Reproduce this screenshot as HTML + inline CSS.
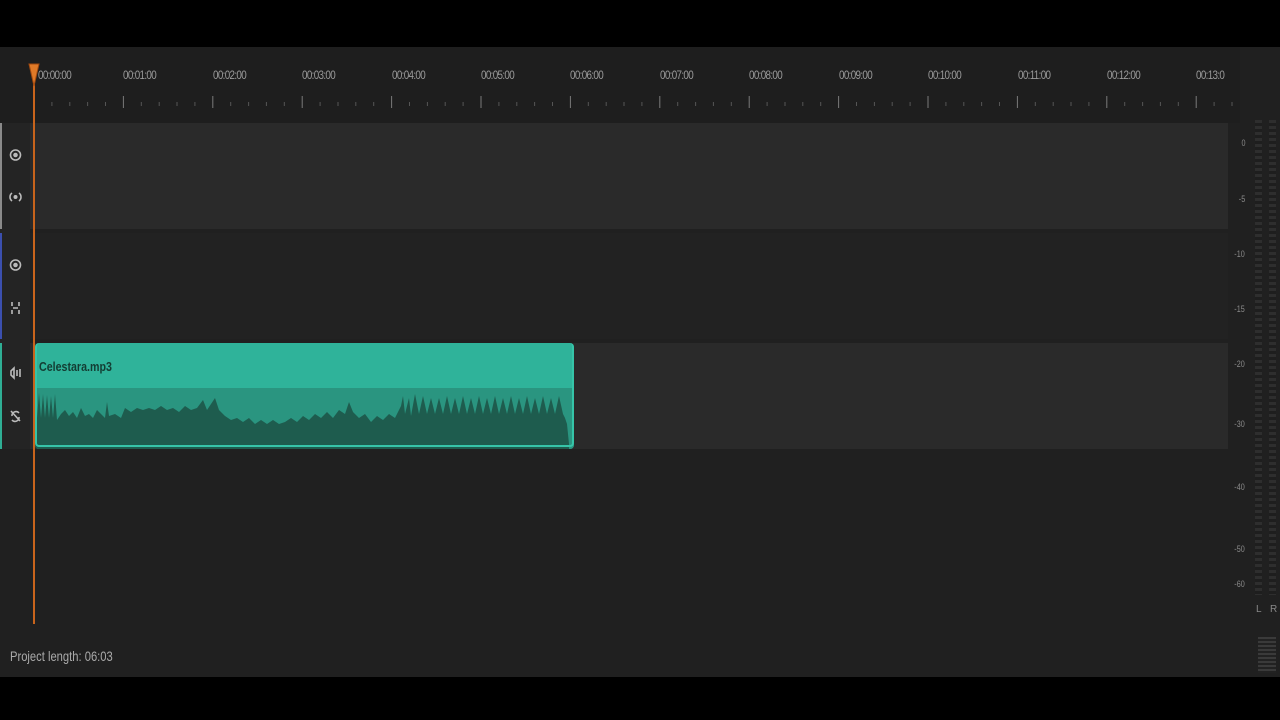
<!DOCTYPE html>
<html><head><style>
body{margin:0;width:1280px;height:720px;background:#000;position:relative;overflow:hidden;font-family:"Liberation Sans",sans-serif}
.a{position:absolute}
.lbl{position:absolute;top:68px;color:#9a9a9a;font-size:12px;letter-spacing:-0.8px;transform:scaleX(.82);transform-origin:left}
.db{position:absolute;right:34px;color:#8a8a8a;font-size:9px;transform:scaleX(.8)}
</style></head><body>
<div class="a" style="left:0;top:47px;width:1280px;height:630px;background:#202020"></div>
<div class="a" style="left:0;top:47px;width:1240px;height:76px;background:#1e1e1e"></div>
<div class="a" style="left:0;top:123px;width:1228px;height:106px;background:#2a2a2a"></div>
<div class="a" style="left:0;top:233px;width:1228px;height:106px;background:#222"></div>
<div class="a" style="left:0;top:343px;width:1228px;height:106px;background:#2a2a2a"></div>
<div class="a" style="left:0;top:123px;width:30px;height:326px;background:#242424"></div>
<div class="a" style="left:0;top:123px;width:2px;height:106px;background:#8a8a8a"></div>
<div class="a" style="left:0;top:233px;width:2px;height:106px;background:#3b4fae"></div>
<div class="a" style="left:0;top:343px;width:2px;height:106px;background:#2fae94"></div>
<svg class="a" style="left:0;top:140px" width="30" height="300" fill="none" stroke="#bbb" stroke-width="1.6">
<circle cx="15.5" cy="15" r="5"/><circle cx="15.5" cy="15" r="1.5" fill="#bbb"/>
<path d="M12 53a5 5 0 0 0 0 8M19 53a5 5 0 0 1 0 8"/><circle cx="15.5" cy="57" r="1.2" fill="#bbb"/>
<circle cx="15.5" cy="125" r="5"/><circle cx="15.5" cy="125" r="1.5" fill="#bbb"/>
<path d="M12 162v4M19 162v4M12 170v4M19 170v4M13 168h5" />
<path d="M11 231l3-3v10l-3-3zM17 230v6M20 229v8"/>
<path d="M11 271l9 10M12 276a4 4 0 0 1 7-3M19 277a4 4 0 0 1-7 3"/>
</svg>
<svg class="a" style="left:0;top:47px" width="1240" height="76" stroke="#555">
<path d="M34 49v12M123.4 49v12M212.8 49v12M302.2 49v12M391.6 49v12M481 49v12M570.4 49v12M659.8 49v12M749.2 49v12M838.6 49v12M928 49v12M1017.4 49v12M1106.8 49v12M1196.2 49v12" stroke="#7a7a7a"/>
<path id="mn" d=""/>
</svg>
<div class="lbl" style="left:38px">00:00:00</div>
<div class="lbl" style="left:123px">00:01:00</div>
<div class="lbl" style="left:213px">00:02:00</div>
<div class="lbl" style="left:302px">00:03:00</div>
<div class="lbl" style="left:392px">00:04:00</div>
<div class="lbl" style="left:481px">00:05:00</div>
<div class="lbl" style="left:570px">00:06:00</div>
<div class="lbl" style="left:660px">00:07:00</div>
<div class="lbl" style="left:749px">00:08:00</div>
<div class="lbl" style="left:839px">00:09:00</div>
<div class="lbl" style="left:928px">00:10:00</div>
<div class="lbl" style="left:1018px">00:11:00</div>
<div class="lbl" style="left:1107px">00:12:00</div>
<div class="lbl" style="left:1196px">00:13:0</div>
<div class="a" style="left:35px;top:343px;width:539px;height:106px;background:#2fb39a;border-radius:4px;overflow:hidden">
 <div class="a" style="left:0;top:45px;width:539px;height:61px;background:#2a9580"></div>
 <svg class="a" style="left:0;top:45px" width="539" height="61">
 <path fill="#1e5c4e" d="M0 61V8L2 30L4 5L6 30L8 6L10 30L12 7L14 30L16 8L18 30L20 6L22 32L26 26L30 22L34 28L38 24L42 30L46 20L50 28L54 26L58 30L62 22L66 26L70 30L72 14L74 28L80 26L86 30L90 20L96 24L102 20L108 22L114 20L120 22L126 18L132 22L138 20L144 24L150 18L156 22L162 20L168 12L172 22L176 16L180 10L184 22L190 28L196 32L202 30L208 34L214 30L220 36L226 32L232 36L238 32L244 36L250 34L256 30L262 34L268 28L274 32L280 26L286 30L292 24L298 30L304 22L310 26L314 14L318 24L324 30L330 26L336 34L342 28L348 32L354 26L360 30L366 18L368 8L370 26L374 10L376 28L380 6L384 26L388 8L392 26L396 10L400 26L404 10L408 26L412 8L416 26L420 10L424 26L428 8L432 26L436 10L440 26L444 8L448 26L452 10L456 26L460 8L464 26L468 10L472 26L476 8L480 26L484 10L488 26L492 8L496 26L500 10L504 26L508 8L512 26L516 10L520 26L524 8L528 26L530 30L532 36L534 56V61Z"/>
 </svg>
 <div class="a" style="left:4px;top:16px;color:#133d33;font-size:13px;font-weight:bold;transform:scaleX(.82);transform-origin:left">Celestara.mp3</div>
 <div class="a" style="left:0;top:0;width:535px;height:102px;border:2px solid #36c4a8;border-radius:4px;border-top:none"></div>
</div>
<div class="a" style="left:33px;top:66px;width:2px;height:558px;background:#c8641c"></div>
<svg class="a" style="left:27px;top:62px" width="14" height="28"><path d="M2 2h10L7 24z" fill="#e07a28" stroke="#a24a10"/></svg>
<div class="db" style="top:138px">0</div>
<div class="db" style="top:194px">-5</div>
<div class="db" style="top:249px">-10</div>
<div class="db" style="top:304px">-15</div>
<div class="db" style="top:359px">-20</div>
<div class="db" style="top:419px">-30</div>
<div class="db" style="top:482px">-40</div>
<div class="db" style="top:544px">-50</div>
<div class="db" style="top:579px">-60</div>
<div class="a" style="left:1255px;top:120px;width:7px;height:475px;background:repeating-linear-gradient(#2e2e2e 0 3px,#1e1e1e 3px 6px)"></div>
<div class="a" style="left:1269px;top:120px;width:7px;height:475px;background:repeating-linear-gradient(#2e2e2e 0 3px,#1e1e1e 3px 6px)"></div>
<div class="a" style="left:1256px;top:604px;color:#888;font-size:10px">L</div>
<div class="a" style="left:1270px;top:604px;color:#888;font-size:10px">R</div>
<div class="a" style="left:1258px;top:637px;width:18px;height:36px;background:repeating-linear-gradient(#3a3a3a 0 2px,#222 2px 4px)"></div>
<div class="a" style="left:10px;top:648px;color:#aaa;font-size:14px;transform:scaleX(.8);transform-origin:left">Project length: 06:03</div>
<script>
var d="";for(var i=0;i<70;i++){var x=34+i*17.88;if(i%5)d+="M"+x.toFixed(1)+" 55v4";}
document.getElementById("mn").setAttribute("d",d);
</script>
</body></html>
